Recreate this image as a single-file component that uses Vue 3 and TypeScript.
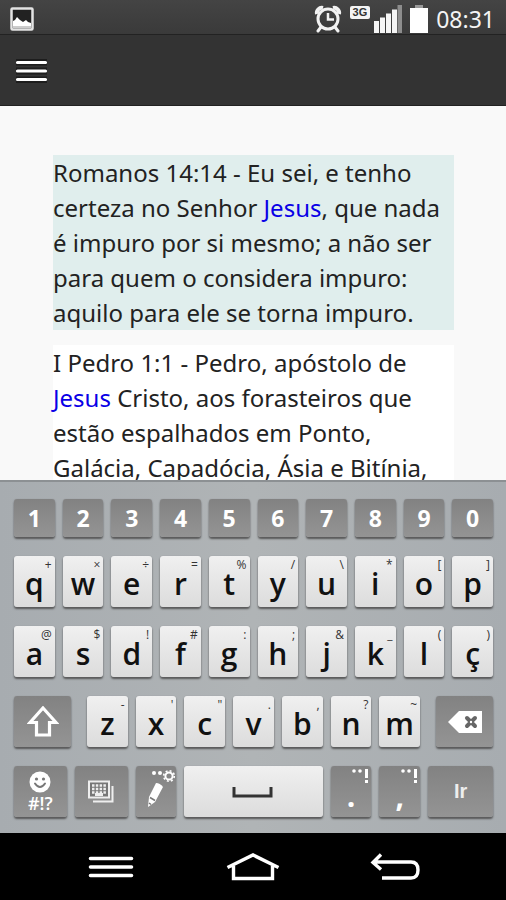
<script setup lang="ts">
interface Key {
  char: string
  hint?: string
}

interface Verse {
  reference: string
  before: string
  match: string
  after: string
}

const verses: Verse[] = [
  {
    reference: 'Romanos 14:14',
    before: 'Eu sei, e tenho certeza no Senhor ',
    match: 'Jesus',
    after: ', que nada é impuro por si mesmo; a não ser para quem o considera impuro: aquilo para ele se torna impuro.',
  },
  {
    reference: 'I Pedro 1:1',
    before: 'Pedro, apóstolo de ',
    match: 'Jesus',
    after: ' Cristo, aos forasteiros que estão espalhados em Ponto, Galácia, Capadócia, Ásia e Bitínia,',
  },
]

// Pairs each letter with the symbol typed by a long press.
function makeKeys(chars: string, hints: string[]): Key[] {
  return [...chars].map((char, i) => ({ char, hint: hints[i] }))
}

const digits = [...'1234567890']
const topRow = makeKeys('qwertyuiop', ['+', '×', '÷', '=', '%', '/', '\\', '*', '[', ']'])
const homeRow = makeKeys('asdfghjklç', ['@', '$', '!', '#', ':', ';', '&', '_', '(', ')'])
const bottomRow = makeKeys('zxcvbnm', ['-', '\'', '"', '.', ',', '?', '~'])
</script>

<template>
  <div class="phone">
    <div class="status">
      <svg class="picture" width="24" height="24" viewBox="0 0 24 24" aria-hidden="true">
        <rect x="1.5" y="1.5" width="21" height="21" rx="1" fill="#222" stroke="#e4e4e4" stroke-width="2.5" />
        <path d="M3 14l2-1 2-3 3 3 3 2 3-2 2 2 3 1v4H3z" fill="#fff" />
        <path d="M3 19h18v2H3z" fill="#ccc" />
      </svg>
      <div class="indicators">
        <svg width="28" height="28" viewBox="0 0 28 28" aria-hidden="true" fill="none" stroke="#f2f2f2">
          <circle cx="14" cy="14" r="10" stroke-width="3" />
          <path d="M3 9a5 5 0 0 1 6-6M19 3a5 5 0 0 1 6 6" stroke-width="4" />
          <path d="M7 22l-3 4M21 22l3 4" stroke-width="3" stroke-linecap="round" />
          <path d="M14 8v6.500h6" stroke-width="2.500" />
        </svg>
        <span class="network">3G</span>
        <svg class="signal" width="28" height="28" viewBox="0 0 28 28" aria-hidden="true" fill="#f5f5f5">
          <path d="M0 16h5v12H0zM6 12.500h5V28H6zM12 8.500h5V28h-5zM18 4.500h5V28h-5z" />
          <path d="M23.500 0H28v28h-4.500z" fill="#8d8d8d" />
        </svg>
        <svg class="battery" width="18" height="28" viewBox="0 0 18 28" aria-hidden="true">
          <path d="M5 0h8v3H5z" fill="#999" />
          <path d="M0 3h18v25H0z" fill="#fff" />
        </svg>
        <time>08:31</time>
      </div>
    </div>

    <header class="toolbar">
      <button class="menu" type="button" aria-label="Menu">
        <svg width="34" height="26" viewBox="0 0 34 26" aria-hidden="true">
          <path d="M2 1h31v24H2z" fill="#1d1d1d" />
          <path d="M2 8.500h31M2 17.500h31" stroke="#333" stroke-width="2" />
          <path d="M3.500 4.500h28M3.500 13h28M3.500 21.500h28" stroke="#fff" stroke-width="3.200" stroke-linecap="round" />
        </svg>
      </button>
    </header>

    <main class="results">
      <p v-for="(verse, i) in verses" :key="verse.reference" class="verse" :class="{ shaded: i % 2 === 0 }">
        {{ verse.reference }} - {{ verse.before }}<span class="match">{{ verse.match }}</span>{{ verse.after }}
      </p>
    </main>

    <section class="keyboard" aria-label="Teclado">
      <div class="row">
        <button v-for="digit in digits" :key="digit" class="key dark digit" type="button">{{ digit }}</button>
      </div>
      <div v-for="(row, r) in [topRow, homeRow]" :key="r" class="row">
        <button v-for="key in row" :key="key.char" class="key" type="button">
          {{ key.char }}<span class="hint">{{ key.hint }}</span>
        </button>
      </div>
      <div class="row spaced">
        <button class="key dark edge" type="button" aria-label="Shift">
          <svg width="32" height="32" viewBox="0 0 32 32" aria-hidden="true">
            <path d="M16 2L29 16.500H22.500V29H9.500V16.500H3z" fill="none" stroke="#fff" stroke-width="3.200" />
          </svg>
        </button>
        <div class="row letters">
          <button v-for="key in bottomRow" :key="key.char" class="key" type="button">
            {{ key.char }}<span class="hint">{{ key.hint }}</span>
          </button>
        </div>
        <button class="key dark edge" type="button" aria-label="Apagar">
          <svg width="36" height="24" viewBox="0 0 36 24" aria-hidden="true">
            <path d="M1 12L12 1h23v22H12z" fill="#fff" />
            <path d="M20 8l8 8M28 8l-8 8" stroke="#666" stroke-width="4" stroke-linecap="round" />
            <circle cx="24" cy="12" r="1.200" fill="#fff" />
          </svg>
        </button>
      </div>
      <div class="row">
        <button class="key dark symbols" type="button">
          <svg width="24" height="22" viewBox="0 0 24 22" aria-hidden="true">
            <circle cx="12" cy="11" r="10.500" fill="#fff" />
            <path d="M7 12.500q5 7 10 0" fill="none" stroke="#777" stroke-width="2" stroke-linecap="round" />
            <circle cx="8.500" cy="8" r="1.600" fill="#777" />
            <circle cx="15.500" cy="8" r="1.600" fill="#777" />
          </svg>
          <span>#!?</span>
        </button>
        <button class="key dark layout" type="button" aria-label="Trocar teclado">
          <svg width="26" height="24" viewBox="0 0 26 24" aria-hidden="true">
            <path d="M5 21.500h19.500V6" fill="none" stroke="#eee" stroke-width="2" />
            <rect x="1" y="1.500" width="20" height="16" fill="#777" stroke="#eee" stroke-width="2" />
            <path d="M4 5.500h14M4 9h14M4 12.500h14" stroke="#eee" stroke-width="2.400" stroke-dasharray="2.500 1.300" />
            <path d="M7 14.500h8" stroke="#eee" stroke-width="3" />
          </svg>
        </button>
        <button class="key dark" type="button" aria-label="Escrita">
          <svg width="40" height="50" viewBox="0 0 40 50" aria-hidden="true">
            <circle cx="18" cy="6" r="2" fill="#fff" />
            <circle cx="24" cy="6" r="2" fill="#fff" />
            <circle cx="33" cy="9" r="3.600" fill="none" stroke="#fff" stroke-width="2" />
            <circle cx="33" cy="9" r="5.300" fill="none" stroke="#fff" stroke-width="1.600" stroke-dasharray="2 2.160" />
            <path d="M20 16q4 0 7 4L19 35l-7 5 1-10z" fill="#fff" />
            <path d="M14 30.500l5 3M13 36l2 1.500" stroke="#777" stroke-width="1.500" />
          </svg>
        </button>
        <button class="key space" type="button" aria-label="Espaço">
          <svg width="42" height="14" viewBox="0 0 42 14" aria-hidden="true">
            <path d="M2 2v9h37V2" fill="none" stroke="#333" stroke-width="3" />
          </svg>
        </button>
        <button v-for="mark in ['.', ',']" :key="mark" class="key dark punctuation" type="button">
          {{ mark }}
          <svg class="more" width="18" height="16" viewBox="0 0 18 16" aria-hidden="true" fill="#fff">
            <circle cx="3" cy="3" r="1.800" />
            <circle cx="9" cy="3" r="1.800" />
            <path d="M14 1h3v9h-3zM14 12h3v3h-3z" />
          </svg>
        </button>
        <button class="key dark go" type="button">Ir</button>
      </div>
    </section>

    <nav class="system">
      <button type="button" aria-label="Menu do sistema">
        <svg width="46" height="26" viewBox="0 0 46 26" aria-hidden="true">
          <path d="M2.500 4.500h41M2.500 13h41M2.500 21.500h41" stroke="#fff" stroke-width="3.600" stroke-linecap="round" />
        </svg>
      </button>
      <button type="button" aria-label="Início">
        <svg width="54" height="28" viewBox="0 0 54 28" aria-hidden="true">
          <path d="M1.500 14.500L27 2l25.500 12.500M7.500 13v12.500h39V13" fill="none" stroke="#fff" stroke-width="3.400" />
        </svg>
      </button>
      <button type="button" aria-label="Voltar">
        <svg width="50" height="28" viewBox="0 0 50 28" aria-hidden="true">
          <path d="M11 1.500L3 9.500l8 7M3 9h38q7 0 7 8t-7 8H12" fill="none" stroke="#fff" stroke-width="3.400" />
        </svg>
      </button>
    </nav>
  </div>
</template>

<style>
body {
  background: #f8f8f8;
}
</style>

<style scoped>
.phone {
  display: flex;
  flex-direction: column;
  height: 100vh;
  font-family: "Noto Sans", "Open Sans", sans-serif;
}

button {
  display: flex;
  align-items: center;
  justify-content: center;
  margin: 0;
  padding: 0;
  border: 0;
  background: none;
  color: inherit;
  font: inherit;
}

svg {
  flex: none;
}

.status {
  display: flex;
  align-items: center;
  justify-content: space-between;
  box-sizing: border-box;
  height: 35px;
  padding: 3px 11px 0 10px;
  border-bottom: 1px solid #222;
  background: linear-gradient(#444, #3a3a3a);
  color: #f4f4f4;
}

.indicators {
  display: flex;
  align-items: center;
  gap: 8px;
}

.network {
  align-self: flex-start;
  margin-top: 2px;
  padding: 0 3px;
  border-radius: 2px;
  background: #f4f4f4;
  color: #333;
  font: bold 11px/13px "Liberation Sans", sans-serif;
}

.signal {
  margin-left: -4px;
}

time {
  font-size: 23px;
  line-height: 30px;
}

.toolbar {
  display: flex;
  align-items: center;
  box-sizing: border-box;
  height: 71px;
  padding: 2px 14px 0;
  border-bottom: 1px solid #222;
  background: #333;
}

.results {
  flex: 1;
  min-height: 0;
  overflow: hidden;
  padding: 49px 52px 0 53px;
  background: #f9f9f9;
}

.verse {
  margin: 0 0 15px;
  background: #fff;
  color: #222;
  font-size: 24px;
  line-height: 35px;
}

.shaded {
  background: #e0eeed;
}

.match {
  color: #0a00e6;
}

.keyboard {
  display: flex;
  flex-direction: column;
  gap: 19px;
  padding: 17px 13px 16px 14px;
  border-top: 2px solid #8c9093;
  background: linear-gradient(90deg, #a7acb0, #b0b4b6 50%, #a7acb0);
}

.row {
  display: flex;
  gap: 8px;
}

.spaced {
  gap: 16px;
}

.letters {
  flex: 333;
}

.key {
  position: relative;
  flex: 41;
  min-width: 0;
  height: 51px;
  padding-top: 5px;
  border-radius: 3px;
  background: linear-gradient(#f0f0f0, #dcdcdc);
  box-shadow: 0 0 1px #85898b, 0 2px 2px #555;
  color: #111;
  font: 600 30px/46px "Open Sans", "Noto Sans", sans-serif;
}

.dark {
  padding-top: 0;
  background: linear-gradient(#828282, #949494);
  color: #fff;
}

.digit {
  height: 38px;
  font-size: 23px;
  font-weight: 700;
  line-height: 38px;
}

.hint {
  position: absolute;
  top: 1px;
  right: 3px;
  color: #333;
  font-size: 12px;
  font-weight: 400;
  line-height: 16px;
}

.edge {
  flex: 57;
}

.symbols {
  flex: 53;
  flex-direction: column;
  font-size: 18px;
  line-height: 20px;
}

.layout {
  flex: 53;
}

.space {
  flex: 139;
  padding-top: 0;
}

.more {
  position: absolute;
  top: 2px;
  right: 2px;
}

.punctuation {
  padding-top: 8px;
  font-weight: 700;
}

.go {
  flex: 65;
  color: #eee;
  font: bold 20px/51px "Liberation Sans", sans-serif;
}

.system {
  display: grid;
  grid-template-columns: repeat(3, 1fr);
  box-sizing: border-box;
  height: 67px;
  padding: 0 40px;
  background: #000;
}
</style>
